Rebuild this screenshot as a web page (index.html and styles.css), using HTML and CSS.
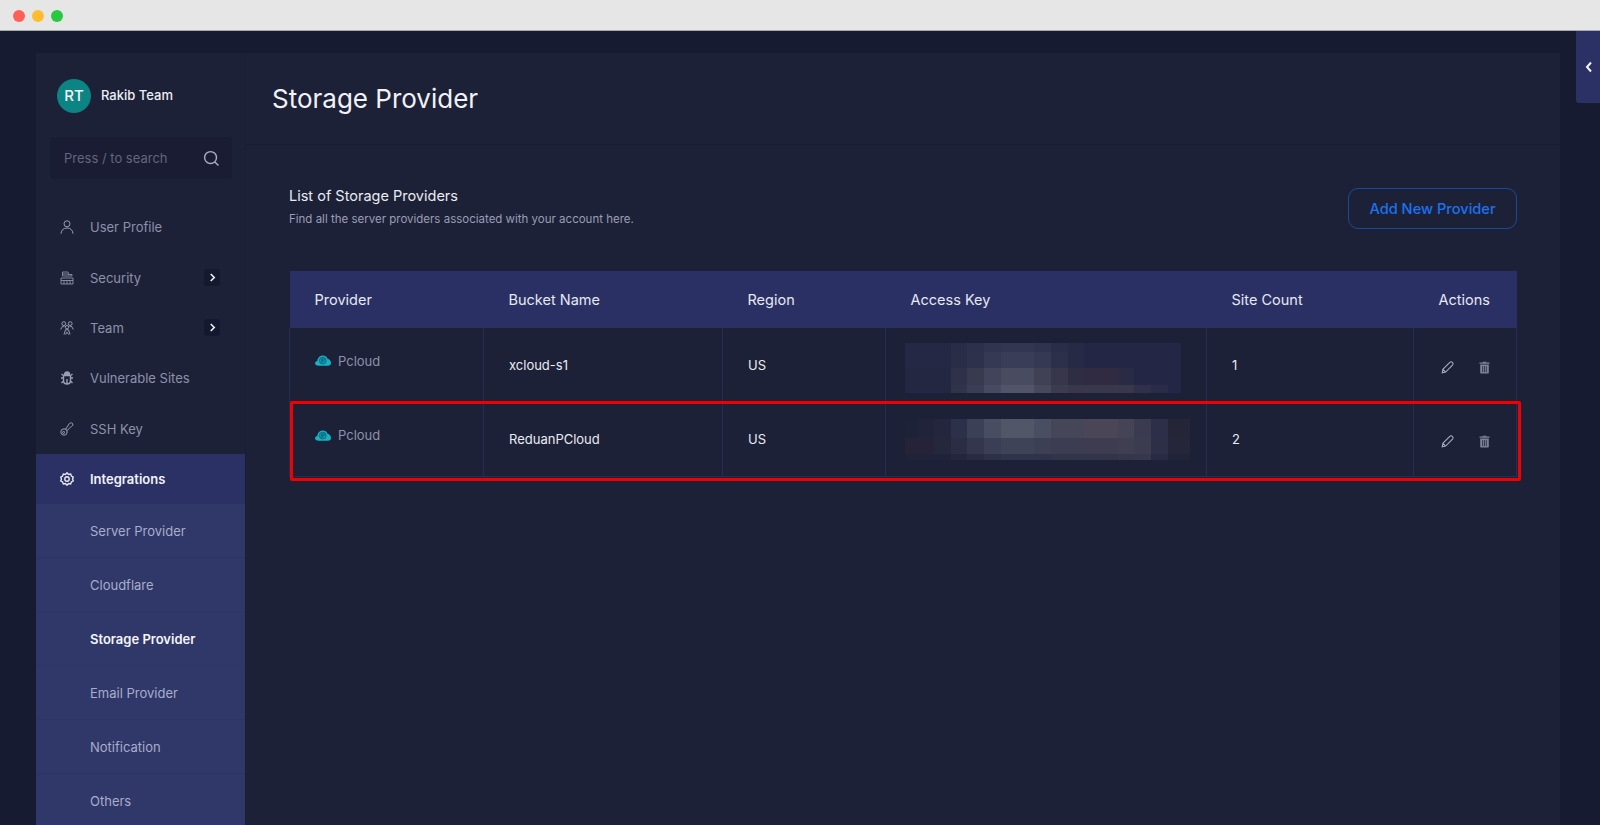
FILE: index.html
```html
<!DOCTYPE html>
<html>
<head>
    <meta charset="utf-8">
    <title>Storage Provider</title>
    <link rel="stylesheet" href="styles.css">
</head>
<body>
<div class="titlebar">
    <span class="dot dot-red"></span>
    <span class="dot dot-yellow"></span>
    <span class="dot dot-green"></span>
</div>

<div class="stage">
    <div class="card">

        <div class="sidebar">
            <div class="team">
                <div class="avatar">RT</div>
                <div class="team-name">Rakib Team</div>
            </div>

            <div class="search">
                <span class="search-text">Press / to search</span>
                <svg class="search-icon" viewBox="0 0 18 18"><circle cx="8" cy="8" r="6.3"/><path d="M12.6 12.6L16.4 16.4"/></svg>
            </div>

            <div class="nav">
                <div class="nav-item">
                    <svg class="nav-icon" viewBox="0 0 14 14"><circle cx="7" cy="3.800" r="3"/><path d="M1 13.700C1.300 10 3.600 8 7 8S12.700 10 13 13.700"/></svg>
                    <span>User Profile</span>
                </div>
                <div class="nav-item">
                    <svg class="nav-icon nav-icon-thin" viewBox="0 0 14 14"><path d="M2.500 1H8C8.500 1.500 8.500 2.500 8 3H2.500ZM2.500 3V5H12V3.500H8M1 7H13V13H1ZM1 9.500H13M4 9.500V13M7 9.500V13M10 9.500V13"/></svg>
                    <span>Security</span>
                    <span class="nav-arrow"><svg viewBox="0 0 8 10"><path d="M2 1L6 5L2 9"/></svg></span>
                </div>
                <div class="nav-item">
                    <svg class="nav-icon" viewBox="0 0 14 14"><circle cx="3.800" cy="2.600" r="1.900"/><circle cx="10.200" cy="2.600" r="1.900"/><circle cx="7" cy="6.200" r="1.700"/><path d="M.7 8.500L2.500 5.300H4.500M13.300 8.500L11.500 5.300H9.500M4 13.500L5.500 8.800H8.500L10 13.500M7 11.200L5.500 13.500M7 11.200L8.500 13.500"/></svg>
                    <span>Team</span>
                    <span class="nav-arrow"><svg viewBox="0 0 8 10"><path d="M2 1L6 5L2 9"/></svg></span>
                </div>
                <div class="nav-item">
                    <svg class="nav-icon nav-icon-bold" viewBox="0 0 14 14"><path d="M4.500 3.500C4.500 2 5.500 1 7 1S9.500 2 9.500 3.500Z" class="solid"/><path d="M3.500 4.500H10.500V9.500C10.500 11.500 9 13 7 13S3.500 11.500 3.500 9.500ZM3.500 7H1M10.500 7H13M1.500 3L3.500 4.500M12.500 3L10.500 4.500M1.500 12L3.500 10M12.500 12L10.500 10M7 8V13"/></svg>
                    <span>Vulnerable Sites</span>
                </div>
                <div class="nav-item">
                    <svg class="nav-icon" viewBox="0 0 14 14"><circle cx="4" cy="10" r="3.200"/><circle cx="3.600" cy="10.400" r="1"/><path d="M5.500 7.300L9.300 1.600C10.300 .4 12.500 .7 12.900 2.100C13.200 3.500 11.700 4.600 10.500 5.200L6.800 8.700"/></svg>
                    <span>SSH Key</span>
                </div>
                <div class="nav-item nav-item-active">
                    <svg class="nav-icon nav-icon-bold" viewBox="0 0 14 14"><path d="M7 .8L8.500 2.400L10.700 2L11.400 4.100L13.300 5.200L12.500 7L13.300 8.800L11.400 9.900L10.700 12L8.500 11.600L7 13.200L5.500 11.600L3.300 12L2.600 9.900L.7 8.800L1.500 7L.7 5.200L2.600 4.100L3.300 2L5.500 2.400Z"/><circle cx="7" cy="7" r="2.200"/></svg>
                    <span>Integrations</span>
                </div>
                <div class="sub-nav">
                    <div class="sub-item">Server Provider</div>
                    <div class="sub-item">Cloudflare</div>
                    <div class="sub-item sub-item-active">Storage Provider</div>
                    <div class="sub-item">Email Provider</div>
                    <div class="sub-item">Notification</div>
                    <div class="sub-item">Others</div>
                </div>
            </div>
        </div>

        <div class="main">
            <div class="page-header">
                <h1 class="page-title">Storage Provider</h1>
            </div>

            <div class="content">
                <div class="list-head">
                    <div>
                        <div class="list-title">List of Storage Providers</div>
                        <div class="list-sub">Find all the server providers associated with your account here.</div>
                    </div>
                    <button class="add-button">Add New Provider</button>
                </div>

                <div class="table-holder">
                    <table class="table">
                        <thead>
                            <tr>
                                <th class="col-provider">Provider</th>
                                <th class="col-bucket">Bucket Name</th>
                                <th class="col-region">Region</th>
                                <th class="col-key">Access Key</th>
                                <th class="col-count">Site Count</th>
                                <th class="col-actions">Actions</th>
                            </tr>
                        </thead>
                        <tbody>
                            <tr>
                                <td>
                                    <div class="provider">
                                        <svg class="cloud" viewBox="0 0 16 11"><path d="M3.500 10.800C1.500 10.800 0 9.800 0 8.300C0 7 1 6.100 2.300 6C2.700 2.700 5 .5 7.800 .5C10 .5 11.800 1.700 12.500 3.700C14.500 4.200 16 5.900 16 8C16 9.800 14.800 10.800 13 10.800Z"/><circle cx="7.800" cy="5.600" r="3.400" class="cloud-ring"/><path d="M6.800 7.800V3.900H8.300C9.800 3.900 9.800 6 8.300 6H6.800" class="cloud-p"/></svg>
                                        <span>Pcloud</span>
                                    </div>
                                </td>
                                <td>xcloud-s1</td>
                                <td>US</td>
                                <td>
                                    <svg class="blur blur-one" viewBox="0 0 276 50" preserveAspectRatio="none">
                                        <rect x="0" y="0" width="276" height="50" fill="#232745"/>
                                        <rect x="0" y="0" width="46" height="25" fill="#242845"/>
                                        <rect x="0" y="25" width="46" height="25" fill="#242741"/>
                                        <rect x="46" y="0" width="16" height="9" fill="#292c47"/>
                                        <rect x="62" y="0" width="17" height="9" fill="#2d304b"/>
                                        <rect x="79" y="0" width="17" height="9" fill="#31344e"/>
                                        <rect x="96" y="0" width="33" height="9" fill="#333651"/>
                                        <rect x="129" y="0" width="17" height="9" fill="#30334e"/>
                                        <rect x="146" y="0" width="17" height="9" fill="#2a2d48"/>
                                        <rect x="163" y="0" width="16" height="9" fill="#272a45"/>
                                        <rect x="46" y="9" width="16" height="16" fill="#2a2d48"/>
                                        <rect x="62" y="9" width="17" height="16" fill="#2e314c"/>
                                        <rect x="79" y="9" width="17" height="16" fill="#363953"/>
                                        <rect x="96" y="9" width="33" height="16" fill="#3a3d58"/>
                                        <rect x="129" y="9" width="17" height="16" fill="#363953"/>
                                        <rect x="146" y="9" width="17" height="16" fill="#2d304b"/>
                                        <rect x="163" y="9" width="16" height="16" fill="#272a45"/>
                                        <rect x="46" y="25" width="16" height="17" fill="#2e3149"/>
                                        <rect x="62" y="25" width="17" height="17" fill="#383b50"/>
                                        <rect x="79" y="25" width="17" height="17" fill="#41445a"/>
                                        <rect x="96" y="25" width="33" height="17" fill="#494c61"/>
                                        <rect x="129" y="25" width="17" height="17" fill="#404155"/>
                                        <rect x="146" y="25" width="17" height="17" fill="#36374b"/>
                                        <rect x="163" y="25" width="16" height="17" fill="#2f2d42"/>
                                        <rect x="179" y="25" width="34" height="17" fill="#302b41"/>
                                        <rect x="213" y="25" width="16" height="17" fill="#292b45"/>
                                        <rect x="46" y="42" width="16" height="8" fill="#303349"/>
                                        <rect x="62" y="42" width="17" height="8" fill="#3a3d55"/>
                                        <rect x="79" y="42" width="17" height="8" fill="#474a60"/>
                                        <rect x="96" y="42" width="33" height="8" fill="#52556a"/>
                                        <rect x="129" y="42" width="17" height="8" fill="#47485c"/>
                                        <rect x="146" y="42" width="17" height="8" fill="#3b3c50"/>
                                        <rect x="163" y="42" width="66" height="8" fill="#39374b"/>
                                        <rect x="229" y="42" width="17" height="8" fill="#2f3049"/>
                                        <rect x="246" y="42" width="17" height="8" fill="#2a2c47"/>
                                    </svg>
                                </td>
                                <td>1</td>
                                <td>
                                    <div class="actions">
                                        <svg class="edit-icon" viewBox="0 0 14 14"><path d="M1.300 12.700L2 9L9.500 1.500C10.300 .7 11.300 .7 12.200 1.600C13.200 2.600 13.200 3.600 12.400 4.400L5 11.900ZM2 9L5 11.900"/></svg>
                                        <svg class="trash-icon" viewBox="0 0 12 14"><path d="M4 1.500V.6H8V1.500H11.500V3H.5V1.500ZM1.300 3.800H10.700V12.500C10.700 13.200 10.200 13.600 9.600 13.600H2.400C1.800 13.600 1.300 13.200 1.300 12.500Z"/><path d="M4 5.500V12M6 5.500V12M8 5.500V12" class="trash-lines"/></svg>
                                    </div>
                                </td>
                            </tr>
                            <tr>
                                <td>
                                    <div class="provider">
                                        <svg class="cloud" viewBox="0 0 16 11"><path d="M3.500 10.800C1.500 10.800 0 9.800 0 8.300C0 7 1 6.100 2.300 6C2.700 2.700 5 .5 7.800 .5C10 .5 11.800 1.700 12.500 3.700C14.500 4.200 16 5.900 16 8C16 9.800 14.800 10.800 13 10.800Z"/><circle cx="7.800" cy="5.600" r="3.400" class="cloud-ring"/><path d="M6.800 7.800V3.900H8.300C9.800 3.900 9.800 6 8.300 6H6.800" class="cloud-p"/></svg>
                                        <span>Pcloud</span>
                                    </div>
                                </td>
                                <td>ReduanPCloud</td>
                                <td>US</td>
                                <td>
                                    <svg class="blur blur-two" viewBox="0 0 285 41" preserveAspectRatio="none">
                                        <rect x="0" y="0" width="13" height="19" fill="#1e2238"/>
                                        <rect x="13" y="0" width="16" height="19" fill="#20233a"/>
                                        <rect x="29" y="0" width="17" height="19" fill="#23263c"/>
                                        <rect x="46" y="0" width="16" height="19" fill="#2c3048"/>
                                        <rect x="62" y="0" width="17" height="19" fill="#3c4056"/>
                                        <rect x="79" y="0" width="17" height="19" fill="#484d62"/>
                                        <rect x="96" y="0" width="33" height="19" fill="#525669"/>
                                        <rect x="129" y="0" width="17" height="19" fill="#4a4e62"/>
                                        <rect x="146" y="0" width="33" height="19" fill="#464659"/>
                                        <rect x="179" y="0" width="34" height="19" fill="#4a4657"/>
                                        <rect x="213" y="0" width="16" height="19" fill="#444456"/>
                                        <rect x="229" y="0" width="17" height="19" fill="#3a3a50"/>
                                        <rect x="246" y="0" width="17" height="19" fill="#2c2f47"/>
                                        <rect x="263" y="0" width="22" height="19" fill="#252538"/>
                                        <rect x="0" y="19" width="13" height="16" fill="#262238"/>
                                        <rect x="13" y="19" width="16" height="16" fill="#262338"/>
                                        <rect x="29" y="19" width="17" height="16" fill="#25273d"/>
                                        <rect x="46" y="19" width="16" height="16" fill="#2a2d44"/>
                                        <rect x="62" y="19" width="17" height="16" fill="#33364d"/>
                                        <rect x="79" y="19" width="17" height="16" fill="#3b3e55"/>
                                        <rect x="96" y="19" width="33" height="16" fill="#3f4358"/>
                                        <rect x="129" y="19" width="17" height="16" fill="#3d4055"/>
                                        <rect x="146" y="19" width="33" height="16" fill="#3c3d52"/>
                                        <rect x="179" y="19" width="34" height="16" fill="#3d3c50"/>
                                        <rect x="213" y="19" width="16" height="16" fill="#403f52"/>
                                        <rect x="229" y="19" width="17" height="16" fill="#3c3c50"/>
                                        <rect x="246" y="19" width="17" height="16" fill="#2c2f46"/>
                                        <rect x="263" y="19" width="22" height="16" fill="#26263a"/>
                                        <rect x="0" y="35" width="46" height="6" fill="#1f2238"/>
                                        <rect x="46" y="35" width="16" height="6" fill="#23263c"/>
                                        <rect x="62" y="35" width="17" height="6" fill="#282b42"/>
                                        <rect x="79" y="35" width="17" height="6" fill="#2d3047"/>
                                        <rect x="96" y="35" width="33" height="6" fill="#30334a"/>
                                        <rect x="129" y="35" width="17" height="6" fill="#2f3249"/>
                                        <rect x="146" y="35" width="67" height="6" fill="#32344a"/>
                                        <rect x="213" y="35" width="16" height="6" fill="#35364c"/>
                                        <rect x="229" y="35" width="17" height="6" fill="#36374c"/>
                                        <rect x="246" y="35" width="17" height="6" fill="#272a42"/>
                                        <rect x="263" y="35" width="22" height="6" fill="#212338"/>
                                    </svg>
                                </td>
                                <td>2</td>
                                <td>
                                    <div class="actions">
                                        <svg class="edit-icon" viewBox="0 0 14 14"><path d="M1.300 12.700L2 9L9.500 1.500C10.300 .7 11.300 .7 12.200 1.600C13.200 2.600 13.200 3.600 12.400 4.400L5 11.900ZM2 9L5 11.900"/></svg>
                                        <svg class="trash-icon" viewBox="0 0 12 14"><path d="M4 1.500V.6H8V1.500H11.500V3H.5V1.500ZM1.300 3.800H10.700V12.500C10.700 13.200 10.200 13.600 9.600 13.600H2.400C1.800 13.600 1.300 13.200 1.300 12.500Z"/><path d="M4 5.500V12M6 5.500V12M8 5.500V12" class="trash-lines"/></svg>
                                    </div>
                                </td>
                            </tr>
                        </tbody>
                    </table>
                    <div class="highlight"></div>
                </div>
            </div>
        </div>

    </div>
</div>

<div class="side-tab">
    <svg viewBox="0 0 8 12"><path d="M6 1.500L2 6L6 10.500"/></svg>
</div>
</body>
</html>
```

FILE: styles.css
```css
* {
    box-sizing: border-box;
    font-family: "Inter", "Liberation Sans", sans-serif;
}

html, body {
    height: 825px;
    margin: 0;
    overflow: hidden;
}

body {
    position: relative;
    background: #171b31;
}

svg {
    display: block;
    flex: none;
}

.titlebar {
    height: 31px;
    padding-left: 13px;
    display: flex;
    align-items: flex-start;
    gap: 7px;
    padding-top: 10px;
    background: #e6e6e6;
    border-bottom: 1px solid #a9a9a9;
}

.dot {
    width: 12px;
    height: 12px;
    border-radius: 50%;
}

.dot-red { background: #ff5f57; }
.dot-yellow { background: #febc2e; }
.dot-green { background: #28c840; }

.stage {
    padding: 22px 40px 0 36px;
    height: 794px;
}

.card {
    height: 772px;
    display: flex;
    background: #1d2138;
}

/* sidebar */

.sidebar {
    width: 210px;
    flex: none;
    border-right: 1px solid #1a1e33;
}

.team {
    height: 84px;
    padding: 26px 0 0 21px;
    display: flex;
    align-items: flex-start;
    gap: 10px;
}

.avatar {
    width: 34px;
    height: 34px;
    border-radius: 50%;
    background: #0c8484;
    color: #f2f6f8;
    font-size: 15px;
    font-weight: 500;
    line-height: 34px;
    text-align: center;
}

.team-name {
    color: #eceef4;
    font-size: 13px;
    font-weight: 500;
    line-height: 32px;
}

.search {
    width: 182px;
    height: 42px;
    margin-left: 14px;
    padding: 0 12px 0 14px;
    display: flex;
    align-items: center;
    justify-content: space-between;
    background: #191c32;
    border-radius: 4px;
}

.search-text {
    color: #62667e;
    font-size: 13px;
}

.search-icon {
    width: 17px;
    height: 17px;
    fill: none;
    stroke: #a9aec2;
    stroke-width: 1.5;
}

.nav {
    padding-top: 23px;
}

.nav-item {
    height: 50.4px;
    padding: 0 25px 0 24px;
    display: flex;
    align-items: center;
    gap: 16px;
    color: #8d91a8;
    font-size: 13px;
}

.nav-item .nav-arrow {
    margin-left: auto;
}

.nav-icon {
    width: 14px;
    height: 14px;
    fill: none;
    stroke: #9a9eb4;
    stroke-width: 1;
}

.nav-icon-thin {
    stroke-width: .8;
}

.nav-icon-bold {
    stroke-width: 1.4;
}

.nav-icon .solid {
    fill: #9a9eb4;
}

.nav-arrow {
    width: 16px;
    height: 17px;
    display: flex;
    align-items: center;
    justify-content: center;
    background: #151930;
    border-radius: 3px;
}

.nav-arrow svg {
    width: 7px;
    height: 9px;
    fill: none;
    stroke: #f1f2f6;
    stroke-width: 1.8;
}

.nav-item-active {
    background: #2b3065;
    color: #f2f3f8;
    font-weight: 600;
}

.nav-item-active .nav-icon {
    stroke: #e8e9f1;
}

.sub-nav {
    background: #2f3868;
}

.sub-item {
    height: 54px;
    padding-left: 54px;
    display: flex;
    align-items: center;
    color: #a8adcb;
    font-size: 13px;
    border-bottom: 1px solid #2d3564;
}

.sub-item-active {
    color: #f4f5fa;
    font-weight: 600;
}

/* main */

.main {
    flex: 1;
    min-width: 0;
}

.page-header {
    height: 92px;
    padding-left: 26px;
    display: flex;
    align-items: center;
    border-bottom: 1px solid #191d32;
}

.page-title {
    margin: 0;
    color: #f1f2f6;
    font-size: 26px;
    font-weight: 400;
}

.content {
    padding: 43px 43px 0 43px;
}

.list-head {
    height: 83px;
    display: flex;
    align-items: flex-start;
    justify-content: space-between;
}

.list-title {
    margin-top: -1px;
    color: #e9ebf1;
    font-size: 14.5px;
    line-height: 18px;
}

.list-sub {
    margin-top: 7px;
    color: #9a9eb4;
    font-size: 11.5px;
    line-height: 14px;
}

.add-button {
    width: 169px;
    height: 41px;
    color: #1a73f0;
    font-size: 14.6px;
    font-weight: 500;
    background: transparent;
    border: 1px solid #1a4a96;
    border-radius: 10px;
}

.table-holder {
    position: relative;
}

.table {
    width: 1227px;
    border-collapse: collapse;
    table-layout: fixed;
}

.table th {
    height: 57px;
    padding: 0 0 0 25px;
    color: #e6e8f2;
    font-size: 14.5px;
    font-weight: 400;
    text-align: left;
    background: #2a3064;
}

.table td {
    height: 74px;
    padding: 0 0 0 25px;
    color: #e9ebf1;
    font-size: 13px;
    border: 1px solid #272c50;
    border-top: 0;
}

.table td:nth-child(4) {
    padding-left: 19px;
}

.table td:nth-child(6) {
    padding-left: 27px;
}

.col-provider { width: 194px; }
.col-bucket { width: 239px; }
.col-region { width: 163px; }
.col-key { width: 321px; }
.col-count { width: 207px; }
.col-actions { width: 103px; }

.provider {
    margin-top: -8px;
    display: flex;
    align-items: center;
    gap: 7px;
    color: #8d91a8;
}

.cloud {
    width: 16px;
    height: 11px;
    fill: #17b0c4;
}

.cloud-ring {
    fill: #129aac;
    stroke: #0c5f72;
    stroke-width: .8;
}

.cloud-p {
    fill: none;
    stroke: #0c5f72;
    stroke-width: .9;
}

.blur-one {
    width: 276px;
    height: 50px;
    margin-top: 6px;
}

.blur-two {
    width: 285px;
    height: 41px;
}

.actions {
    display: flex;
    align-items: center;
    gap: 25px;
    margin-top: 5px;
}

.edit-icon {
    width: 13px;
    height: 13px;
    fill: none;
    stroke: #a9aec4;
    stroke-width: 1.1;
}

.trash-icon {
    width: 11px;
    height: 13px;
    fill: #7d8197;
}

.trash-lines {
    fill: none;
    stroke: #1d2138;
    stroke-width: .8;
}

/* red box from the annotated screenshot */
.highlight {
    position: absolute;
    left: 1px;
    right: -4px;
    top: 130px;
    height: 80px;
    border: 3px solid #f00000;
    border-radius: 2px;
}

.side-tab {
    position: absolute;
    top: 31px;
    right: 0;
    width: 24px;
    height: 72px;
    display: flex;
    align-items: center;
    padding-left: 9px;
    background: #2b3065;
    border-bottom-left-radius: 3px;
}

.side-tab svg {
    width: 8px;
    height: 12px;
    fill: none;
    stroke: #f4f5fa;
    stroke-width: 2;
}
```
